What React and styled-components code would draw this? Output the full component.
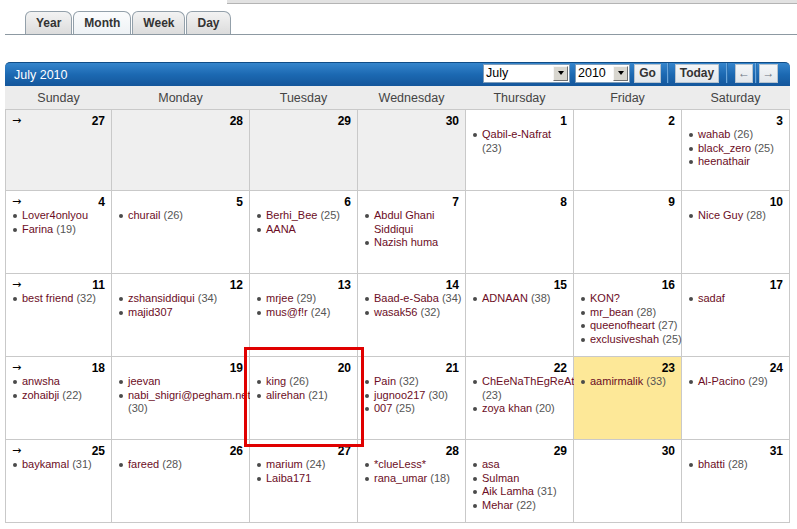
import React from 'react';
import styled, { createGlobalStyle } from 'styled-components';

const GlobalStyle = createGlobalStyle`
  body {
    margin: 0;
    background: #fff;
    font-family: "Liberation Sans", Arial, sans-serif;
  }
`;

const DAYS = ['Sunday', 'Monday', 'Tuesday', 'Wednesday', 'Thursday', 'Friday', 'Saturday'];

// [name, age, ageOnNewLine, allowWrap]
const weeks = [
  [
    { day: 27, muted: true },
    { day: 28, muted: true },
    { day: 29, muted: true },
    { day: 30, muted: true },
    { day: 1, events: [['Qabil-e-Nafrat', 23, true]] },
    { day: 2 },
    { day: 3, events: [['wahab', 26], ['black_zero', 25], ['heenathair']] },
  ],
  [
    { day: 4, events: [['Lover4onlyou'], ['Farina', 19]] },
    { day: 5, events: [['churail', 26]] },
    { day: 6, events: [['Berhi_Bee', 25], ['AANA']] },
    { day: 7, events: [['Abdul Ghani Siddiqui', null, false, true], ['Nazish huma']] },
    { day: 8 },
    { day: 9 },
    { day: 10, events: [['Nice Guy', 28]] },
  ],
  [
    { day: 11, events: [['best friend', 32]] },
    { day: 12, events: [['zshansiddiqui', 34], ['majid307']] },
    { day: 13, events: [['mrjee', 29], ['mus@f!r', 24]] },
    { day: 14, events: [['Baad-e-Saba', 34], ['wasak56', 32]] },
    { day: 15, events: [['ADNAAN', 38]] },
    { day: 16, events: [['KON?'], ['mr_bean', 28], ['queenofheart', 27], ['exclusiveshah', 25]] },
    { day: 17, events: [['sadaf']] },
  ],
  [
    { day: 18, events: [['anwsha'], ['zohaibji', 22]] },
    { day: 19, events: [['jeevan'], ['nabi_shigri@pegham.net', 30, true]] },
    { day: 20, marked: true, events: [['king', 26], ['alirehan', 21]] },
    { day: 21, events: [['Pain', 32], ['jugnoo217', 30], ['007', 25]] },
    { day: 22, events: [['ChEeNaThEgReAt', 23, true], ['zoya khan', 20]] },
    { day: 23, today: true, events: [['aamirmalik', 33]] },
    { day: 24, events: [['Al-Pacino', 29]] },
  ],
  [
    { day: 25, events: [['baykamal', 31]] },
    { day: 26, events: [['fareed', 28]] },
    { day: 27, events: [['marium', 24], ['Laiba171']] },
    { day: 28, events: [['*clueLess*'], ['rana_umar', 18]] },
    { day: 29, events: [['asa'], ['Sulman'], ['Aik Lamha', 31], ['Mehar', 22]] },
    { day: 30 },
    { day: 31, events: [['bhatti', 28]] },
  ],
];

const Page = styled.div`
  width: 797px;
`;

const TopStrip = styled.div`
  margin-left: 227px;
  height: 3px;
  background: #e2e2e2;
  border-bottom: 1px solid #b4b4b4;
`;

const TabBar = styled.div`
  display: flex;
  gap: 1px;
  margin: 7px 0 0 5px;
  padding-left: 20px;
  border-bottom: 1px solid #8d99a2;
`;

const Tab = styled.div`
  height: 22px;
  padding: 0 10px;
  display: flex;
  align-items: center;
  border: 1px solid #93a0aa;
  border-bottom: none;
  border-radius: 6px 7px 0 0;
  background: ${p => (p.$active ? 'linear-gradient(#fbfcfd, #eef2f5)' : 'linear-gradient(#f3f3f3, #dcdcdc)')};
  font-size: 12px;
  font-weight: bold;
  color: #333;
`;

const Calendar = styled.div`
  margin: 27px 0 0 5px;
  width: 785px;
`;

const TitleBar = styled.div`
  height: 23px;
  display: flex;
  align-items: center;
  justify-content: space-between;
  padding: 0 12px 0 9px;
  border-top: 1px solid #0f4c86;
  border-radius: 5px 5px 0 0;
  background: linear-gradient(#3585cc, #1c69b2 50%, #14569b);
`;

const Title = styled.span`
  color: #fff;
  font-size: 12.5px;
`;

const Controls = styled.div`
  display: flex;
  align-items: center;
  margin-top: -3px;
`;

const SelectBox = styled.div`
  width: ${p => p.$w}px;
  height: 19px;
  box-sizing: border-box;
  display: flex;
  align-items: center;
  justify-content: space-between;
  padding: 0 1px 0 2px;
  margin-right: ${p => p.$mr || 0}px;
  background: #fff;
  border: 1px solid #7f9db9;
  font-size: 12.5px;
  color: #000;
`;

const DropButton = styled.span`
  width: 15px;
  height: 15px;
  box-sizing: border-box;
  display: flex;
  align-items: center;
  justify-content: center;
  background: #d8d6cf;
  border: 1px solid;
  border-color: #f6f6f6 #6f6f6f #6f6f6f #f6f6f6;
`;

const Arrow = styled.span`
  width: 0;
  height: 0;
  border-left: 3.5px solid transparent;
  border-right: 3.5px solid transparent;
  border-top: 4px solid #000;
`;

const Button = styled.button`
  width: ${p => p.$w}px;
  height: 19px;
  padding: 0;
  border: 1px solid #b7c3ce;
  background: linear-gradient(#f4f6f8, #e3e7eb);
  font-family: "Liberation Sans", Arial, sans-serif;
  font-size: 12px;
  font-weight: ${p => (p.$light ? 'normal' : 'bold')};
  color: ${p => (p.$light ? '#6b7580' : '#333')};
  cursor: pointer;
`;

const Separator = styled.span`
  width: 1px;
  height: 20px;
  margin: 0 ${p => p.$m ?? 6}px;
  background: #6aa6dc;
  border-right: 1px solid #2b6fae;
`;

const WeekHeader = styled.div`
  display: grid;
  grid-template-columns: 105px 137px repeat(5, 107px);
  column-gap: 1px;
  padding: 0 1px;
  height: 23px;
  align-items: center;
  background: #ececec;
`;

const DayName = styled.div`
  text-align: center;
  font-size: 12.5px;
  color: #444;
`;

const Grid = styled.div`
  display: grid;
  grid-template-columns: 105px 137px repeat(5, 107px);
  grid-template-rows: 80px repeat(4, 82px);
  gap: 1px;
  background: #c9c9c9;
  border: 1px solid #c9c9c9;
`;

const Cell = styled.div`
  position: relative;
  padding: 3px 6px 0 6px;
  background: ${p => (p.$muted ? '#efefef' : p.$today ? '#fde898' : '#fff')};
`;

const CellTop = styled.div`
  display: flex;
  justify-content: space-between;
  align-items: center;
  height: 15px;
`;

const WeekLink = styled.span`
  font-family: "DejaVu Sans", sans-serif;
  font-size: 11px;
  color: #000;
`;

const DayNumber = styled.span`
  margin-left: auto;
  font-size: 12px;
  font-weight: bold;
  color: #000;
`;

const EventList = styled.ul`
  margin: 0;
  padding: 0;
  list-style: none;
`;

const Event = styled.li`
  position: relative;
  padding-left: 10px;
  font-size: 11px;
  line-height: 13.5px;
  color: #555;
  white-space: ${p => (p.$wrap ? 'normal' : 'nowrap')};

  &::before {
    content: '';
    position: absolute;
    left: 1px;
    top: 5px;
    width: 4px;
    height: 4px;
    border-radius: 50%;
    background: #4a4a4a;
  }
`;

const Name = styled.span`
  color: #6c0d25;
`;

const Age = styled.span`
  display: ${p => (p.$block ? 'block' : 'inline')};
`;

const Marker = styled.div`
  position: absolute;
  left: -6px;
  top: -10px;
  right: -7px;
  bottom: -8px;
  border: 3px solid #e00000;
  z-index: 3;
  pointer-events: none;
`;

const Dropdown = ({ value, width, mr }) => (
  <SelectBox $w={width} $mr={mr}>
    <span>{value}</span>
    <DropButton><Arrow /></DropButton>
  </SelectBox>
);

const DayCell = ({ cell, first }) => (
  <Cell $muted={cell.muted} $today={cell.today}>
    <CellTop>
      {first && <WeekLink>→</WeekLink>}
      <DayNumber>{cell.day}</DayNumber>
    </CellTop>
    {cell.events && (
      <EventList>
        {cell.events.map(([name, age, newLine, wrap]) => (
          <Event key={name} $wrap={wrap}>
            <Name>{name}</Name>
            {age != null && <Age $block={newLine}>{newLine ? `(${age})` : ` (${age})`}</Age>}
          </Event>
        ))}
      </EventList>
    )}
    {cell.marked && <Marker />}
  </Cell>
);

export default function App() {
  return (
    <Page>
      <GlobalStyle />
      <TopStrip />
      <TabBar>
        <Tab>Year</Tab>
        <Tab $active>Month</Tab>
        <Tab>Week</Tab>
        <Tab>Day</Tab>
      </TabBar>

      <Calendar>
        <TitleBar>
          <Title>July 2010</Title>
          <Controls>
            <Dropdown value="July" width={87} mr={5} />
            <Dropdown value="2010" width={55} mr={4} />
            <Button $w={27}>Go</Button>
            <Separator $m={6} />
            <Button $w={44}>Today</Button>
            <Separator $m={7} />
            <Button $light $w={18}>←</Button>
            <Separator $m={2} />
            <Button $light $w={19}>→</Button>
          </Controls>
        </TitleBar>

        <WeekHeader>
          {DAYS.map(d => <DayName key={d}>{d}</DayName>)}
        </WeekHeader>

        <Grid>
          {weeks.map((week, wi) =>
            week.map((cell, ci) => (
              <DayCell key={`${wi}-${ci}`} cell={cell} first={ci === 0} />
            ))
          )}
        </Grid>
      </Calendar>
    </Page>
  );
}
